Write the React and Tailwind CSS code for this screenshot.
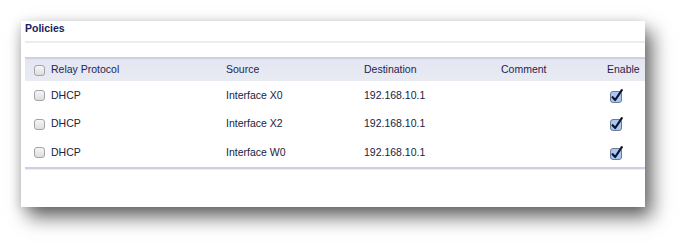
const rows = [
  { proto: "DHCP", source: "Interface X0", dest: "192.168.10.1" },
  { proto: "DHCP", source: "Interface X2", dest: "192.168.10.1" },
  { proto: "DHCP", source: "Interface W0", dest: "192.168.10.1" },
];

function Box({ checked }) {
  if (checked) {
    return (
      <svg width="14" height="14" viewBox="0 0 14 14" className="block">
        <rect x="0.5" y="2.5" width="11" height="11" rx="2.5" fill="#a9c7f2" stroke="#6c7a96" />
        <path d="M2.6 8.2 L5.2 11 L11.8 1.2" fill="none" stroke="#0d1530" strokeWidth="2.2" strokeLinecap="round" strokeLinejoin="round" />
      </svg>
    );
  }
  return (
    <span className="block h-[11px] w-[11px] rounded-[3px] border border-[#a4a4a8] bg-gradient-to-b from-[#f6f6f6] to-[#dedede]" />
  );
}

export default function App() {
  return (
    <div className="h-[250px] w-[687px] bg-white pl-[21px] pt-[21px] font-['Liberation_Sans',Arial,sans-serif]">
      <div className="h-[186px] w-[624px] bg-white pl-[4px] shadow-[7px_10px_18px_rgba(0,0,0,0.6),-2px_2px_10px_rgba(0,0,0,0.12)]">
        <div className="h-[20px] text-[10.5px] font-bold text-[#1b2058]">
          Policies
        </div>
        <div className="h-[2px] bg-[#ececec]" />
        <div className="h-[14px]" />
        <div className="flex h-[24px] items-center border-t-2 border-[#cdd0e2] bg-gradient-to-b from-[#e3e6f1] to-[#e9ebf3] text-[10.5px] text-[#1f2450]">
          <div className="flex w-[201px] items-center gap-[6px] pl-[9px]">
            <Box />
            <span>Relay Protocol</span>
          </div>
          <div className="w-[138px]">Source</div>
          <div className="w-[137px]">Destination</div>
          <div className="w-[106px]">Comment</div>
          <div>Enable</div>
        </div>
        {rows.map((r, i) => (
          <div key={i} className="flex h-[28.5px] items-center pt-[1px] text-[10.5px] text-[#20233f]">
            <div className="flex w-[201px] items-center gap-[6px] pl-[9px]">
              <Box />
              <span>{r.proto}</span>
            </div>
            <div className="w-[138px]">{r.source}</div>
            <div className="w-[137px]">{r.dest}</div>
            <div className="w-[106px]" />
            <div className="pl-[3px]">
              <Box checked />
            </div>
          </div>
        ))}
        <div className="h-[3px] border-t-2 border-[#cdd0e2] bg-[#eceef5]" />
      </div>
    </div>
  );
}
